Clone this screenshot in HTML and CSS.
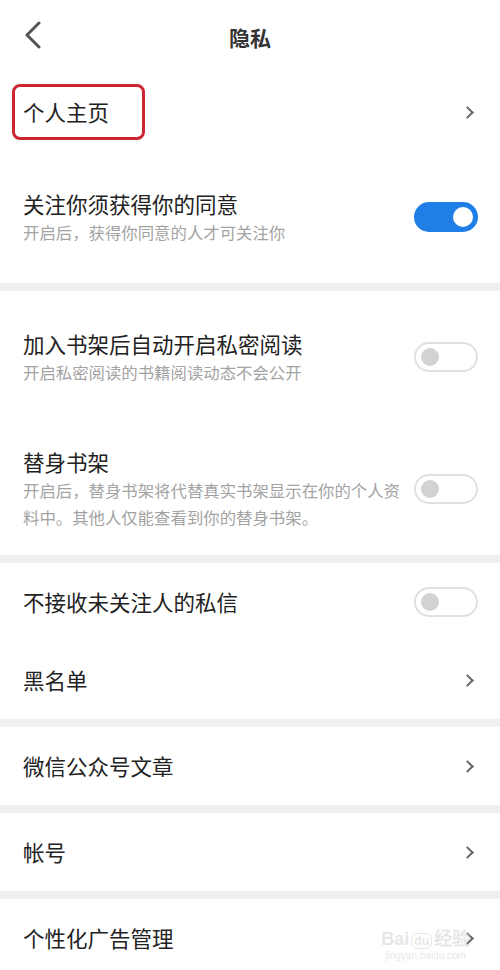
FILE: index.html
```html
<!DOCTYPE html>
<html lang="zh-CN">
<head>
    <meta charset="UTF-8">
    <meta name="viewport" content="width=device-width, initial-scale=1.0">
    <title>隐私</title>
    <link rel="stylesheet" href="styles.css">
</head>
<body>
  <div class="page">
    <div class="header">
        <svg class="back" width="18" height="28" viewBox="0 0 18 28">
            <path d="M15 2 L3 14 L15 26" fill="none" stroke="#555" stroke-width="3" stroke-linecap="round" stroke-linejoin="round"/>
        </svg>
        <h2 class="title">隐私</h2>
    </div>

    <div class="section">
        <div class="row">
            <span class="label marked">个人主页</span>
            <span class="arrow"></span>
        </div>
        <div class="row tall">
            <div class="text">
                <div class="label">关注你须获得你的同意</div>
                <div class="sub">开启后，获得你同意的人才可关注你</div>
            </div>
            <span class="switch on"></span>
        </div>
    </div>

    <div class="section">
        <div class="row tall">
            <div class="text">
                <div class="label">加入书架后自动开启私密阅读</div>
                <div class="sub">开启私密阅读的书籍阅读动态不会公开</div>
            </div>
            <span class="switch"></span>
        </div>
        <div class="row tall">
            <div class="text">
                <div class="label">替身书架</div>
                <div class="sub">开启后，替身书架将代替真实书架显示在你的个人资料中。其他人仅能查看到你的替身书架。</div>
            </div>
            <span class="switch"></span>
        </div>
    </div>

    <div class="section">
        <div class="row">
            <span class="label">不接收未关注人的私信</span>
            <span class="switch"></span>
        </div>
        <div class="row">
            <span class="label">黑名单</span>
            <span class="arrow"></span>
        </div>
    </div>

    <div class="section">
        <div class="row">
            <span class="label">微信公众号文章</span>
            <span class="arrow"></span>
        </div>
    </div>

    <div class="section">
        <div class="row">
            <span class="label">帐号</span>
            <span class="arrow"></span>
        </div>
    </div>

    <div class="section">
        <div class="row">
            <span class="label">个性化广告管理</span>
            <span class="arrow"></span>
        </div>
    </div>

    <div class="watermark">
        <span class="wm-logo">Bai<span class="wm-du">du</span>经验</span>
        <span class="wm-url">jingyan.baidu.com</span>
    </div>
  </div>
</body>
</html>
```

FILE: styles.css
```css
body {
    margin: 0;
    background: #f0f0f0;
    font-family: "Noto Sans CJK SC", "Noto Sans", sans-serif;
    color: #222;
}

.page {
    position: relative;
    width: 500px;
    height: 970px;
    overflow: hidden;
    background: #f0f0f0;
}

.header {
    position: relative;
    display: flex;
    align-items: center;
    justify-content: center;
    height: 73px;
    background: #fff;
}

.back {
    position: absolute;
    left: 24px;
    top: 21px;
}

.title {
    margin: 0;
    font-size: 21px;
    font-weight: bold;
    color: #333;
    line-height: 30px;
}

.section {
    background: #fff;
    margin-bottom: 8px;
}

.row {
    display: flex;
    align-items: center;
    justify-content: space-between;
    min-height: 78px;
    padding: 0 22px 0 23px;
    box-sizing: border-box;
}

.row.tall {
    min-height: 132px;
}

.text {
    max-width: 388px;
}

.label {
    font-size: 21.5px;
    line-height: 30px;
    color: #222;
}

.sub {
    font-size: 16.4px;
    line-height: 27px;
    color: #a3a3a3;
}

.marked {
    margin-left: -11px;
    padding: 10px 33px 10px 8px;
    border: 3px solid #cc2631;
    border-radius: 8px;
}

.arrow {
    width: 7px;
    height: 7px;
    margin-right: 6px;
    border-top: 2px solid #666;
    border-right: 2px solid #666;
    transform: rotate(45deg);
}

.switch {
    position: relative;
    flex-shrink: 0;
    width: 64px;
    height: 30px;
    border: 2px solid #e0e0e0;
    border-radius: 15px;
    box-sizing: border-box;
    background: #fff;
}

.switch::after {
    content: "";
    position: absolute;
    left: 5px;
    top: 4px;
    width: 18px;
    height: 18px;
    border-radius: 50%;
    background: #d2d2d2;
}

.switch.on {
    border-color: #1f7fe6;
    background: #1f7fe6;
}

.switch.on::after {
    left: auto;
    right: 3px;
    top: 3px;
    width: 20px;
    height: 20px;
    background: #fff;
}

.watermark {
    position: absolute;
    right: 30px;
    bottom: 8px;
    display: flex;
    flex-direction: column;
    align-items: center;
    color: rgba(205, 205, 205, 0.5);
    pointer-events: none;
}

.wm-logo {
    font-family: "Liberation Sans", sans-serif;
    font-weight: bold;
    font-size: 18px;
    line-height: 22px;
}

.wm-du {
    display: inline-block;
    margin: 0 2px;
    padding: 0 2px;
    border: 1px solid rgba(205, 205, 205, 0.5);
    border-radius: 6px;
    font-size: 12px;
    line-height: 14px;
}

.wm-url {
    font-family: "Liberation Sans", sans-serif;
    font-size: 10px;
    line-height: 12px;
}
```
